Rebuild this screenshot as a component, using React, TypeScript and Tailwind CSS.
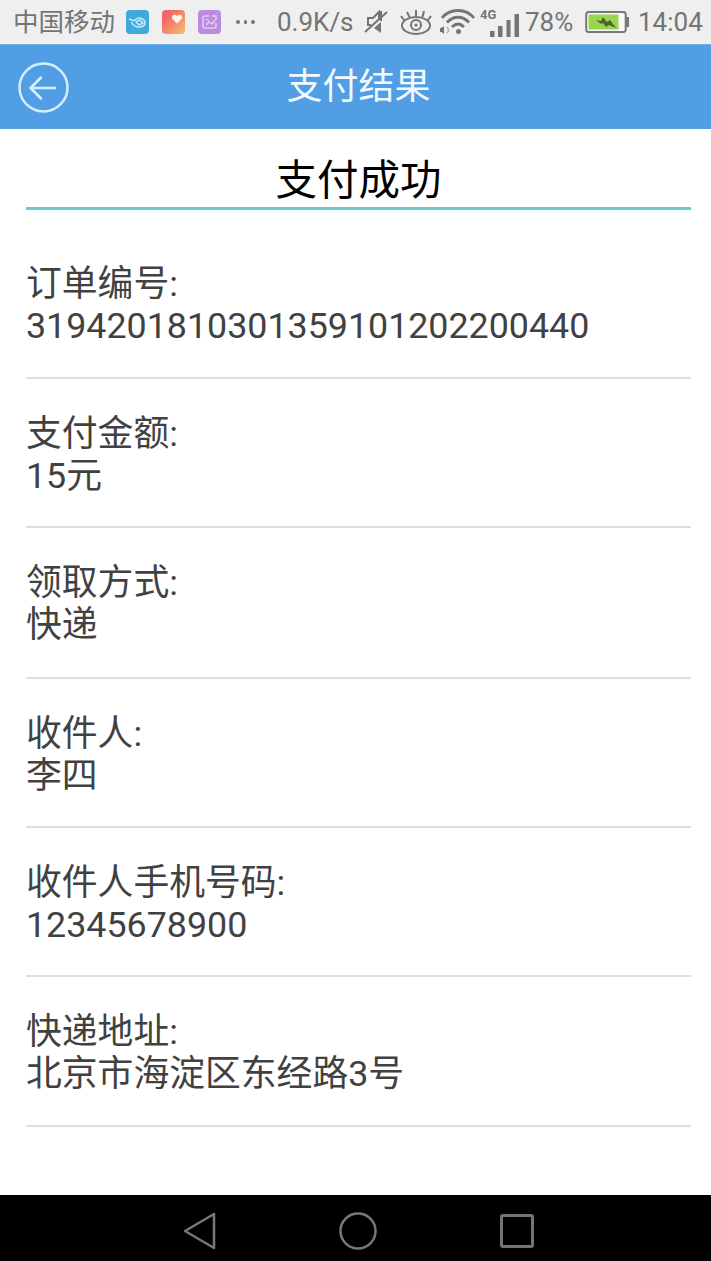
import React from 'react';

const orderDetails = [
  { label: '订单编号:', value: '3194201810301359101202200440', height: 'h-[150px]' },
  { label: '支付金额:', value: '15元', height: 'h-[149px]' },
  { label: '领取方式:', value: '快递', height: 'h-[151px]' },
  { label: '收件人:', value: '李四', height: 'h-[149px]' },
  { label: '收件人手机号码:', value: '12345678900', height: 'h-[149px]' },
  { label: '快递地址:', value: '北京市海淀区东经路3号', height: 'h-[150px]' },
];

const AppIcons: React.FC = () => (
  <div className="flex gap-[13px] ml-[11px]">
    <svg className="w-[23px] h-[24px]" viewBox="0 0 23 24" fill="none">
      <rect width="23" height="24" rx="4" fill="#3fa9dc" />
      <path d="M3 9l4 1.5c2 .5 3.500-2.500 6-2.500 3 0 6 2 6 4.500S17 17 13 17s-6-1.500-7.500-5M10 12l4-2 3 3-4 2z" stroke="#c4e9f8" strokeWidth="1.600" strokeLinejoin="round" />
    </svg>
    <svg className="w-[23px] h-[24px]" viewBox="0 0 23 24" fill="none">
      <defs>
        <linearGradient id="heartBg" x1="0" y1="0" x2="1" y2="1">
          <stop offset="0.200" stopColor="#f2666b" />
          <stop offset="1" stopColor="#f7bd6c" />
        </linearGradient>
      </defs>
      <rect width="23" height="24" rx="4" fill="url(#heartBg)" />
      <path d="M15 13.500L10.500 9C8.500 6 12.500 3 15 6c2.500-3 6.500 0 4.500 3z" fill="#fff5ee" />
      <path d="M8 14v4M12 15v3" stroke="#f88a70" strokeWidth="1.500" />
    </svg>
    <svg className="w-[23px] h-[24px]" viewBox="0 0 23 24" fill="none">
      <rect width="23" height="24" rx="4" fill="#bb8ce0" />
      <path d="M11 6H7Q5 6 5 8v8q0 2 2 2h9q2 0 2-2v-3M14 6h4v4M8 9l3 2M8 15l3-3 3 2 3-4" stroke="#e5cbf6" strokeWidth="1.500" strokeLinejoin="round" />
    </svg>
  </div>
);

const MuteIcon: React.FC = () => (
  <svg className="w-[24px] h-[26px] ml-[11px]" viewBox="0 0 24 26" fill="none" stroke="#747474">
    <path d="M15 10V3L9 9H4v7h3" strokeWidth="2" />
    <path d="M1 23L23 3" strokeWidth="2" />
    <path d="M10 19l7-6v11z" fill="#747474" stroke="none" />
    <path d="M17 2v10" strokeWidth="2" />
  </svg>
);

const EyeIcon: React.FC = () => (
  <svg className="w-[32px] h-[27px] ml-[12px]" viewBox="0 0 32 27" fill="none" stroke="#747474">
    <ellipse cx="16" cy="16.500" rx="14" ry="8.500" strokeWidth="2" />
    <circle cx="16" cy="16" r="5" strokeWidth="2" />
    <circle cx="16" cy="16" r="1.600" fill="#747474" stroke="none" />
    <path d="M16 7V1M9.500 8L7 3M22.500 8L24 2M4 11L1 7M28 11l3-4" strokeWidth="2" />
  </svg>
);

const WifiIcon: React.FC = () => (
  <svg className="w-[36px] h-[26px] ml-[7px]" viewBox="0 0 36 26" fill="none" stroke="#747474">
    <path d="M3 9C11-1 27-1 35 9" strokeWidth="2.800" />
    <path d="M8 13.500c6-7 16-7 22 0" strokeWidth="2.800" />
    <path d="M13 18c4-4 8-4 12 0" strokeWidth="2.800" />
    <circle cx="19.500" cy="22.500" r="2.500" fill="#747474" stroke="none" />
    <path d="M1 19h1.500L5 17v8l-2.500-2H1z" fill="#747474" stroke="none" />
    <path d="M8 18c2 2 2 4 0 6" stroke="#b5b5b5" strokeWidth="1.500" />
  </svg>
);

const SignalIcon: React.FC = () => (
  <svg className="w-[40px] h-[32px] ml-[5px]" viewBox="0 0 40 32" fill="#747474">
    <text x="0" y="13" className="text-[13px] font-bold">4G</text>
    <rect x="10" y="25" width="4.500" height="6" />
    <rect x="18" y="20" width="4.500" height="11" />
    <rect x="26.500" y="14" width="4" height="17" />
    <rect x="34.500" y="8" width="4.500" height="23" />
  </svg>
);

const BatteryIcon: React.FC = () => (
  <svg className="w-[45px] h-[24px] ml-[8px]" viewBox="0 0 45 24" fill="none">
    <rect x="1.200" y="2" width="39.500" height="20" rx="2.500" fill="#f8f8f8" stroke="#777" strokeWidth="2" />
    <rect x="3.500" y="4.500" width="30" height="15" fill="#97d64f" />
    <path d="M42.500 7v10" stroke="#777" strokeWidth="3" />
    <path d="M11 10l5 1 2-4 4 5 3-2 6 8-7-3-3 2-3-4-2 1z" fill="#4c6533" />
  </svg>
);

const StatusBar: React.FC = () => (
  <div className="h-[44px] bg-[#efefef] text-[#747474] flex items-center pl-[13px] whitespace-nowrap [&>*]:shrink-0">
    <span className="w-[102px] text-[25.500px]">中国移动</span>
    <AppIcons />
    <div className="flex gap-1 ml-[15px] w-[19px]">
      <i className="size-[4px] rounded-full bg-[#747474]" />
      <i className="size-[4px] rounded-full bg-[#747474]" />
      <i className="size-[4px] rounded-full bg-[#747474]" />
    </div>
    <span className="w-[76px] ml-[22px] text-[26px]">0.9K/s</span>
    <MuteIcon />
    <EyeIcon />
    <WifiIcon />
    <SignalIcon />
    <span className="w-[52px] ml-[5px] text-[26px]">78%</span>
    <BatteryIcon />
    <span className="ml-[8px] text-[26px]">14:04</span>
  </div>
);

const Header: React.FC = () => (
  <header className="h-[85px] bg-[#529ee5] border-t border-[#6eaeea] grid grid-cols-[1fr_auto_1fr] items-center pl-[18px] pr-[12px]">
    <button aria-label="返回">
      <svg className="size-[51px]" viewBox="0 0 51 51" fill="none" stroke="#d3efff" strokeLinecap="round" strokeLinejoin="round">
        <circle cx="25.500" cy="25.500" r="24" strokeWidth="2.500" />
        <path d="M37 26H13M23 15.500L12.500 26 23 36.500" strokeWidth="2.500" />
      </svg>
    </button>
    <h1 className="text-[36px] text-[#f0faff]">支付结果</h1>
    <span />
  </header>
);

const NavigationBar: React.FC = () => (
  <nav className="h-[66px] bg-black flex items-center pt-[6px] pl-[182px]">
    <svg className="w-[34px] h-[38px]" viewBox="0 0 34 38" fill="none" stroke="#777" strokeWidth="2.500" strokeLinejoin="round">
      <path d="M32 2v34L3 19z" />
    </svg>
    <svg className="size-[40px] ml-[122px]" viewBox="0 0 40 40" fill="none" stroke="#777" strokeWidth="2.500">
      <circle cx="20" cy="20" r="17.500" />
    </svg>
    <span className="size-[34px] ml-[122px] border-[3px] border-[#747474] rounded-[3px]" />
  </nav>
);

const App: React.FC = () => {
  return (
    <div className="w-[711px] h-[1261px] overflow-hidden bg-white flex flex-col font-[Roboto,'Noto_Sans_CJK_SC',sans-serif]">
      <StatusBar />
      <Header />

      <main className="flex-1 pl-[26px] pr-[20px]">
        <h2 className="h-[81px] pt-[26px] text-center text-[41.500px] leading-[52px] text-black border-b-[3px] border-[#68cbd3]">
          支付成功
        </h2>

        {/* Order details */}
        <div className="pt-[19px]">
          {orderDetails.map((item) => (
            <div
              key={item.label}
              className={`${item.height} pt-[34px] border-b-2 border-[#dedede] text-[35.800px] leading-[42px] text-[#414141]`}
            >
              <p>{item.label}</p>
              <p>{item.value}</p>
            </div>
          ))}
        </div>
      </main>

      <NavigationBar />
    </div>
  );
};

export default App;
